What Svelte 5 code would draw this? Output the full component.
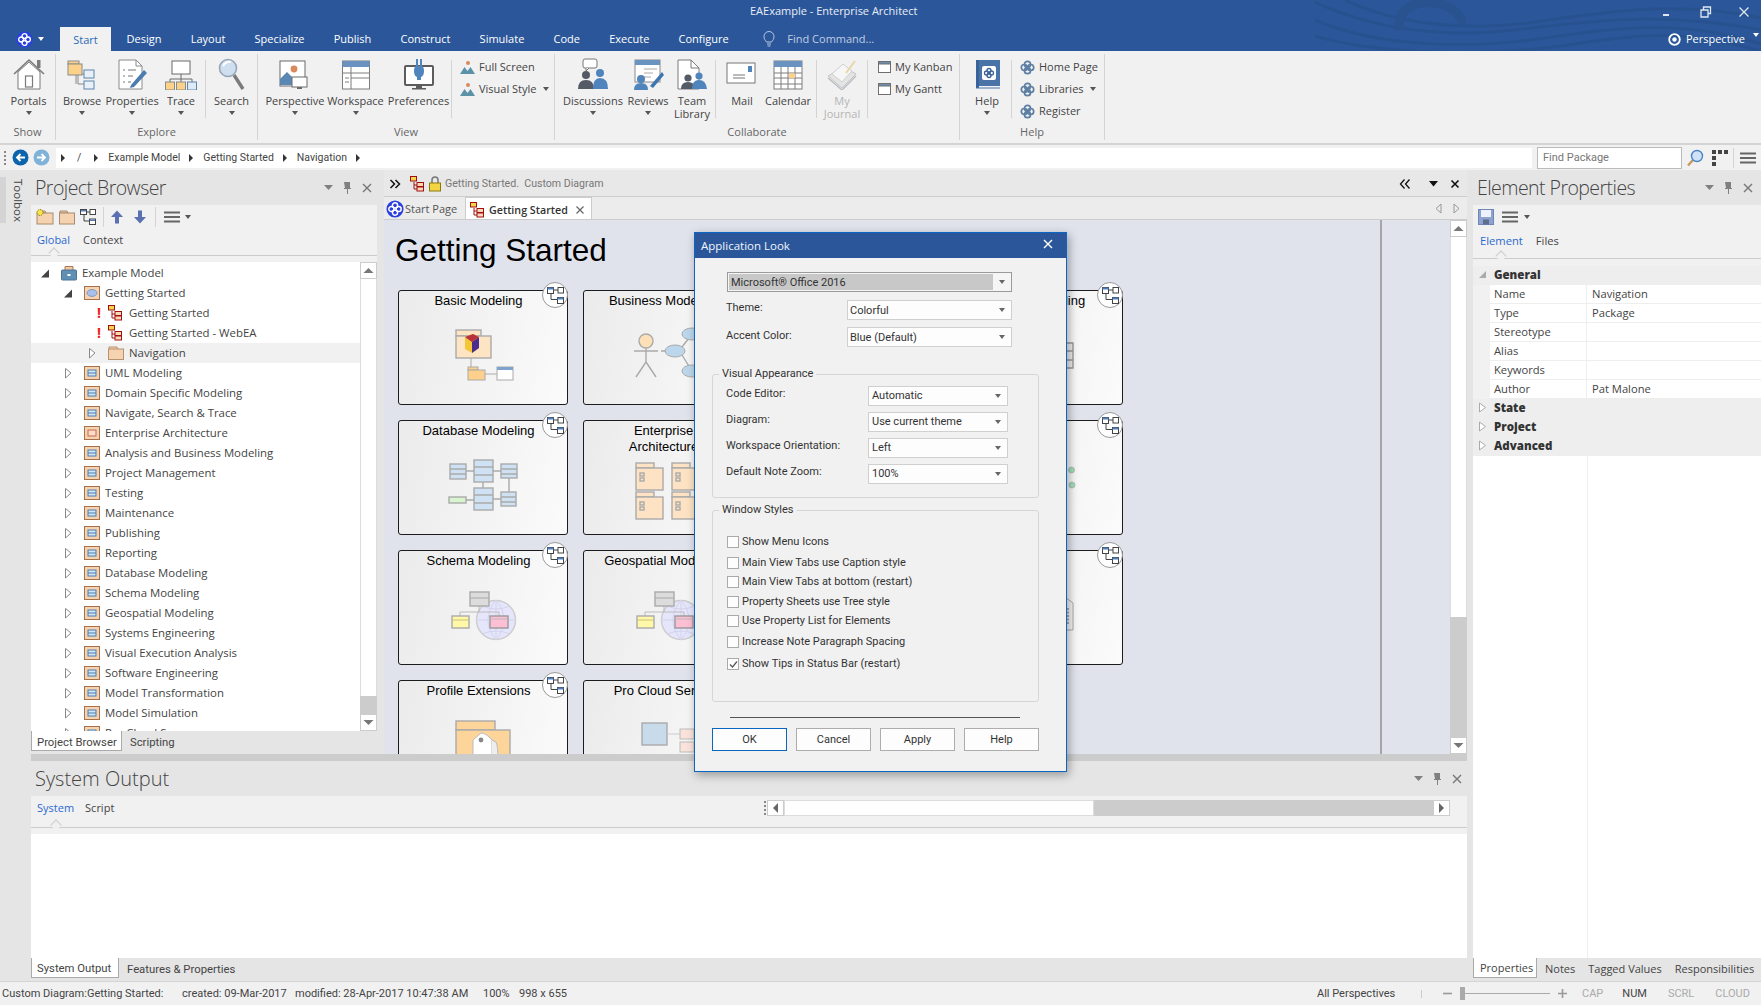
<script>
  const mainTabs = ['Design', 'Layout', 'Specialize', 'Publish', 'Construct', 'Simulate', 'Code', 'Execute', 'Configure'];

  const ribbon = [
    { name: 'Show', w: 56, pad: 0, items: [{ label: 'Portals', icon: 'portals', w: 57, caret: true }] },
    { name: 'Explore', w: 202, pad: 1, items: [
      { label: 'Browse', icon: 'browse', w: 50, caret: true },
      { label: 'Properties', icon: 'properties', w: 50, caret: true },
      { label: 'Trace', icon: 'trace', w: 48, caret: true },
      { sep: true },
      { label: 'Search', icon: 'search', w: 51, caret: true }
    ] },
    { name: 'View', w: 297, pad: 7, items: [
      { label: 'Perspective', icon: 'perspective', w: 60, caret: true },
      { label: 'Workspace', icon: 'workspace', w: 61, caret: true },
      { label: 'Preferences', icon: 'preferences', w: 65 },
      { sep: true },
      { ml: 8, small: [{ label: 'Full Screen', icon: 'mountain' }, { label: 'Visual Style', icon: 'mountain', caret: true }] }
    ] },
    { name: 'Collaborate', w: 405, pad: 8, items: [
      { label: 'Discussions', icon: 'discussions', w: 60, caret: true },
      { label: 'Reviews', icon: 'reviews', w: 50, caret: true },
      { label: 'Team\nLibrary', icon: 'team', w: 38 },
      { sep: true, ml: 4 },
      { label: 'Mail', icon: 'mail', w: 52 },
      { label: 'Calendar', icon: 'calendar', w: 40 },
      { sep: true, ml: 8 },
      { label: 'My\nJournal', icon: 'journal', w: 50, off: true },
      { sep: true },
      { ml: 10, small: [{ label: 'My Kanban', icon: 'win' }, { label: 'My Gantt', icon: 'win' }] }
    ] },
    { name: 'Help', w: 145, pad: 3, items: [
      { label: 'Help', icon: 'help', w: 48, caret: true },
      { sep: true },
      { ml: 8, small: [{ label: 'Home Page', icon: 'swirl' }, { label: 'Libraries', icon: 'swirl', caret: true }, { label: 'Register', icon: 'swirl' }] }
    ] }
  ];

  const tree = [
    { name: 'Example Model', lvl: 0, icon: 'model', open: true },
    { name: 'Getting Started', lvl: 1, icon: 'usecase', open: true },
    { name: 'Getting Started', lvl: 2, icon: 'diagram', warn: true },
    { name: 'Getting Started - WebEA', lvl: 2, icon: 'diagram', warn: true },
    { name: 'Navigation', lvl: 2, icon: 'folder', closed: true, hover: true },
    ...['UML Modeling', 'Domain Specific Modeling', 'Navigate, Search & Trace'].map((name) => ({ name, lvl: 1, icon: 'pkg', closed: true })),
    { name: 'Enterprise Architecture', lvl: 1, icon: 'pkgred', closed: true },
    ...[
      'Analysis and Business Modeling', 'Project Management', 'Testing', 'Maintenance', 'Publishing', 'Reporting',
      'Database Modeling', 'Schema Modeling', 'Geospatial Modeling', 'Systems Engineering', 'Visual Execution Analysis',
      'Software Engineering', 'Model Transformation', 'Model Simulation', 'Pro Cloud Server'
    ].map((name) => ({ name, lvl: 1, icon: 'pkg', closed: true }))
  ];

  const cards = [
    { title: 'Basic Modeling', art: 'basic', badge: true },
    { title: 'Business Modeling', art: 'business' },
    { title: 'Requirements', art: '' },
    { title: 'Process Modeling', art: 'box', badge: true },
    { title: 'Database Modeling', art: 'database', badge: true },
    { title: 'Enterprise\nArchitecture', art: 'enterprise' },
    { title: 'Testing', art: '' },
    { title: '', art: 'dots', badge: true },
    { title: 'Schema Modeling', art: 'schema', badge: true },
    { title: 'Geospatial Modeling', art: 'schema' },
    { title: 'Reporting', art: '' },
    { title: '', art: 'doc', badge: true },
    { title: 'Profile Extensions', art: 'profile', badge: true },
    { title: 'Pro Cloud Server', art: 'cloud' }
  ];

  const props = [['Name', 'Navigation'], ['Type', 'Package'], ['Stereotype', ''], ['Alias', ''], ['Keywords', ''], ['Author', 'Pat Malone']];

  const visual = [['Code Editor:', 'Automatic'], ['Diagram:', 'Use current theme'], ['Workspace Orientation:', 'Left'], ['Default Note Zoom:', '100%']];

  const checks = [
    { label: 'Show Menu Icons', h: 20 },
    { label: 'Main View Tabs use Caption style', h: 22 },
    { label: 'Main View Tabs at bottom (restart)', h: 16 },
    { label: 'Property Sheets use Tree style', h: 24 },
    { label: 'Use Property List for Elements', h: 14 },
    { label: 'Increase Note Paragraph Spacing', h: 28 },
    { label: 'Show Tips in Status Bar (restart)', h: 16, on: true }
  ];
</script>

{#snippet logo(size)}
  <svg width={size} height={size} viewBox="0 0 16 16" class="ico">
    <circle cx="8" cy="8" r="7.6" fill="#2a3fe0" />
    <g fill="none" stroke="#fff" stroke-width="1.3">
      <circle cx="8" cy="4.8" r="2.3" /><circle cx="8" cy="11.2" r="2.3" /><circle cx="4.8" cy="8" r="2.3" /><circle cx="11.2" cy="8" r="2.3" />
    </g>
  </svg>
{/snippet}

{#snippet swirl()}
  <svg width="15" height="15" viewBox="0 0 16 16" class="ico">
    <g fill="none" stroke="#5d7fa3" stroke-width="1.8">
      <circle cx="8" cy="4.6" r="3.2" /><circle cx="8" cy="11.4" r="3.2" /><circle cx="4.6" cy="8" r="3.2" /><circle cx="11.4" cy="8" r="3.2" />
    </g>
  </svg>
{/snippet}

{#snippet smallIcon(name)}
  {#if name === 'mountain'}
    <svg width="15" height="15" viewBox="0 0 15 15" class="ico">
      <circle cx="8" cy="3" r="2" fill="#d9895b" />
      <path d="M0 14 L4.5 7 L7.5 11 L10.5 7 L15 14 Z" fill="#5b92a8" />
    </svg>
  {:else if name === 'win'}
    <svg width="13" height="12" viewBox="0 0 13 12" class="ico">
      <rect x="0.5" y="0.5" width="12" height="11" fill="#fff" stroke="#6f6f6f" />
      <rect x="0.5" y="0.5" width="12" height="2.5" fill="#6f8fb0" stroke="#6f6f6f" />
    </svg>
  {:else}
    {@render swirl()}
  {/if}
{/snippet}

{#snippet bigIcon(name)}
  <svg width="32" height="32" viewBox="0 0 32 32" class="ico">
    {#if name === 'portals'}
      <path d="M1 16 L16 2 L31 16" fill="none" stroke="#7b7b7b" stroke-width="1.6" />
      <path d="M5 14 L16 4 L27 14 V31 H5 Z" fill="#fff" stroke="#7b7b7b" />
      <rect x="24" y="2" width="3.5" height="8" fill="#7b7b7b" />
      <rect x="12.5" y="18" width="7" height="11" fill="#fff" stroke="#7b7b7b" stroke-width="1.2" />
    {:else if name === 'browse'}
      <path d="M18 16 H12 V26 H18 M10 13 V26" fill="none" stroke="#888" />
      <rect x="2" y="3" width="11" height="3" fill="#fcd28b" stroke="#8b8b8b" />
      <rect x="2" y="6" width="14" height="11" fill="#fcd28b" stroke="#8b8b8b" />
      <rect x="18" y="12" width="10" height="8" fill="#e8f0f8" stroke="#5d86ad" />
      <rect x="18" y="23" width="10" height="8" fill="#e8f0f8" stroke="#5d86ad" />
    {:else if name === 'properties'}
      <path d="M3 2 H20 L26 8 V31 H3 Z" fill="#fff" stroke="#8a8a8a" />
      <path d="M20 2 V8 H26" fill="none" stroke="#8a8a8a" />
      <path d="M7 12 h2 M12 12 h8 M7 18 h2 M12 18 h5 M7 24 h2 M12 24 h3" stroke="#777" />
      <path d="M15 27 L28 12 L31 15 L18 29 L14 30 Z" fill="#4c7cae" />
    {:else if name === 'trace'}
      <rect x="7" y="3" width="18" height="13" fill="#fff" stroke="#6b6b6b" />
      <path d="M16 16 V21 M5 24 V21 H27 V24 M16 21 V24" fill="none" stroke="#6b6b6b" />
      <rect x="0.5" y="24" width="9" height="8" fill="#fcd28b" stroke="#8b8b8b" />
      <rect x="11.5" y="24" width="9" height="8" fill="#fcd28b" stroke="#8b8b8b" />
      <rect x="22.5" y="24" width="9" height="8" fill="#dcebf6" stroke="#5d86ad" />
    {:else if name === 'search'}
      <path d="M18 17 L27 31" stroke="#7b7b7b" stroke-width="3.4" />
      <circle cx="12" cy="10" r="8.5" fill="#cfdff0" stroke="#97a7b8" stroke-width="1.6" />
      <path d="M7 8 q3 -5 8 -4" fill="none" stroke="#fff" stroke-width="2" />
    {:else if name === 'perspective'}
      <rect x="1" y="3" width="25" height="25" fill="#fff" stroke="#6b6b6b" />
      <circle cx="15" cy="11" r="3.4" fill="#d9895b" />
      <path d="M1 27 V21 L8 14 L15 21 V27 Z" fill="#5a88b5" />
      <rect x="13" y="19" width="15" height="10" fill="#fff" stroke="#6b6b6b" />
      <path d="M18 29 h5 v2 h-5 z" fill="#6b6b6b" />
    {:else if name === 'workspace'}
      <rect x="2.5" y="3" width="27" height="28" fill="#fff" stroke="#7d7d7d" />
      <rect x="2.5" y="3" width="27" height="6" fill="#6a93bf" />
      <path d="M11 9 V31 M2.5 15 H29.5 M11 20 H29.5 M5 20 h4 M5 24 h4" fill="none" stroke="#7d7d7d" />
    {:else if name === 'preferences'}
      <rect x="2" y="8" width="28" height="19" rx="1" fill="#fff" stroke="#5d5d5d" stroke-width="2" />
      <path d="M13 27 h6 v3 h4 v1.5 h-14 v-1.5 h4 z" fill="#5d5d5d" />
      <path d="M13 1 h2 v7 h2 v-7 h2 v7 q2 1 2 5 q0 5 -3 6 v3 h-4 v-3 q-3 -1 -3 -6 q0 -4 2 -5 z" fill="#4f84bd" />
    {:else if name === 'discussions'}
      <rect x="6" y="1" width="14" height="9" rx="2" fill="#fff" stroke="#777" />
      <path d="M9 10 v3 l3 -3" fill="#fff" stroke="#777" />
      <circle cx="9" cy="17" r="4" fill="#555b66" />
      <path d="M1 31 q0 -9 8 -9 q8 0 8 9 z" fill="#555b66" />
      <circle cx="23" cy="15" r="4" fill="#4f84bd" />
      <path d="M16 31 q0 -11 7 -11 q8 0 8 11 z" fill="#4f84bd" />
    {:else if name === 'reviews'}
      <rect x="3" y="2" width="25" height="22" fill="#fff" stroke="#8a8a8a" />
      <rect x="3" y="2" width="25" height="5" fill="#6a93bf" />
      <path d="M12 11 h13 M12 15 h9 M12 19 h7" stroke="#aaa" />
      <circle cx="9" cy="21" r="4" fill="#4f84bd" />
      <path d="M2 32 q0 -7 7 -7 q7 0 7 7 z" fill="#4f84bd" />
      <path d="M18 28 L30 14 L32 17 L21 30 Z" fill="#3f76b0" />
    {:else if name === 'team'}
      <path d="M2 2 H15 L23 10 V31 H2 Z" fill="#fff" stroke="#7a7a7a" />
      <path d="M15 2 V10 H23" fill="none" stroke="#7a7a7a" />
      <circle cx="12" cy="20" r="3.6" fill="#555b66" />
      <path d="M5 31 q0 -7 7 -7 q7 0 7 7 z" fill="#555b66" />
      <circle cx="23" cy="18" r="3.6" fill="#4f84bd" />
      <path d="M16 31 q0 -9 7 -9 q7 0 8 9 z" fill="#4f84bd" />
    {:else if name === 'mail'}
      <rect x="1" y="5" width="28" height="20" fill="#fff" stroke="#777" />
      <rect x="22" y="8" width="4" height="6" fill="#4f84bd" />
      <path d="M7 17 h12 M7 20 h12" stroke="#777" />
    {:else if name === 'calendar'}
      <rect x="2" y="3" width="28" height="28" fill="#fff" stroke="#7d7d7d" />
      <rect x="2" y="3" width="28" height="6" fill="#6a93bf" />
      <path d="M9 9 V31 M16 9 V31 M23 9 V31 M2 15 H30 M2 20 H30 M2 26 H30" stroke="#7d7d7d" />
      <rect x="17" y="15.5" width="6" height="4.5" fill="#fcd28b" />
    {:else if name === 'journal'}
      <path d="M2 18 L17 9 L30 16 L16 30 Z" fill="#e4e4e4" stroke="#c4c4c4" />
      <path d="M6 16 L17 6 L26 13 L16 24 Z" fill="#f6f6f6" stroke="#cfcfcf" />
      <path d="M20 15 L29 3" stroke="#e8d6a5" stroke-width="2" />
      <path d="M2 20 L16 32 L30 18" fill="none" stroke="#b9bfc6" stroke-width="1.5" />
    {:else if name === 'help'}
      <rect x="5" y="2" width="24" height="26" fill="#4a74a8" />
      <rect x="5" y="2" width="3" height="28" fill="#3a629a" />
      <path d="M5 30 H29" stroke="#4a74a8" />
      <rect x="11" y="8" width="14" height="14" rx="2" fill="#fff" />
      <g fill="none" stroke="#3a629a" stroke-width="1.3">
        <circle cx="18" cy="12.5" r="2" /><circle cx="18" cy="17.5" r="2" /><circle cx="15.5" cy="15" r="2" /><circle cx="20.5" cy="15" r="2" />
      </g>
    {/if}
  </svg>
{/snippet}

{#snippet treeIcon(name)}
  <svg width="17" height="16" viewBox="0 0 17 16" class="ico">
    {#if name === 'model'}
      <path d="M4 5 V1.5 H12 V5" fill="#f3c9a0" stroke="#a77a53" />
      <rect x="0.5" y="5" width="15" height="10" rx="1" fill="#5f8fb5" stroke="#4b7396" />
      <rect x="6.5" y="9" width="3" height="2" fill="#fff" />
    {:else if name === 'folder'}
      <path d="M1 4 V2 H9 L10 4" fill="#f6d3b0" stroke="#b79272" />
      <rect x="0.5" y="4" width="15" height="10.5" fill="#f6d3b0" stroke="#b79272" />
    {:else if name === 'diagram'}
      <g stroke="#a01010" fill="#fff">
        <path d="M4 6 V13 H7 M4 9 H7" fill="none" />
        <rect x="0.5" y="0.5" width="6" height="4.5" fill="#f7d24b" />
        <rect x="7" y="6.5" width="6.5" height="4" fill="#f9d9b7" />
        <rect x="7" y="11" width="6.5" height="4" fill="#f9d9b7" />
      </g>
    {:else}
      <rect x="0.5" y="1.5" width="15" height="13" fill="#f6d3b0" stroke="#a4714a" />
      {#if name === 'usecase'}
        <ellipse cx="8" cy="8" rx="5" ry="3.4" fill="#a9c0ea" stroke="#7f97c4" />
      {:else if name === 'pkgred'}
        <rect x="4" y="5" width="8" height="6" fill="#fbdcc4" stroke="#c56a5a" />
      {:else}
        <rect x="4" y="5" width="8" height="6" fill="#d3e4f3" stroke="#4a7fb0" />
        <path d="M4 8 H12" stroke="#4a7fb0" />
      {/if}
    {/if}
  </svg>
{/snippet}

{#snippet expander(open)}
  <svg width="12" height="12" viewBox="0 0 12 12" class="ico">
    {#if open}
      <path d="M2 10.5 H10 V2.5 Z" fill="#444" />
    {:else}
      <path d="M3.5 1.5 L9 6 L3.5 11 Z" fill="#fff" stroke="#888" />
    {/if}
  </svg>
{/snippet}

{#snippet panelControls()}
  <svg width="48" height="14" viewBox="0 0 48 14" class="ico">
    <path d="M0 4 H9 L4.5 9 Z" fill="#808080" />
    <path d="M20 1 h6 v6 h1 v1 h-3 v5 h-1 v-5 h-3 v-1 h1 z" fill="#808080" />
    <path d="M39 3 L47 11 M47 3 L39 11" stroke="#777" stroke-width="1.4" />
  </svg>
{/snippet}

{#snippet menuIcon()}
  <svg width="16" height="12" viewBox="0 0 16 12" class="ico">
    <path d="M0 1.5 H16 M0 6 H16 M0 10.5 H16" stroke="#666" stroke-width="1.8" />
  </svg>
{/snippet}

{#snippet scrollArrow(up)}
  <svg width="17" height="17" viewBox="0 0 17 17" class="ico scroll-btn">
    <rect x="0.5" y="0.5" width="16" height="16" fill="#fff" stroke="#ccc" />
    <path d={up ? 'M3.5 11 L8.5 6 L13.5 11 Z' : 'M3.5 6 L8.5 11 L13.5 6 Z'} fill="#777" />
  </svg>
{/snippet}

{#snippet combo(value, cls)}
  <div class="combo {cls}">
    <span class="combo-value">{value}</span>
    <i class="caret"></i>
  </div>
{/snippet}

{#snippet cardArt(art)}
  <svg class="art" width="170" height="115" viewBox="0 0 170 115">
    {#if art === 'basic'}
      <path d="M73 68 V80 M87 84 H99" stroke="#aaa" />
      <rect x="58" y="40" width="25" height="6" fill="#fde5c4" stroke="#aaa" stroke-width="1.4" />
      <rect x="58" y="46" width="35" height="22" fill="#fde5c4" stroke="#aaa" stroke-width="1.4" />
      <path d="M67 47 L75 44 L81 47 V58 L74 63 L67 59 Z" fill="#f5c538" />
      <path d="M74 52 V63 L81 58 V47 Z" fill="#4a2d8c" />
      <path d="M67 47 L75 44 L81 47 L74 52 Z" fill="#b8323c" />
      <rect x="70" y="77" width="10" height="3" fill="#fdd08c" stroke="#aaa" />
      <rect x="70" y="80" width="17" height="10" fill="#fdd08c" stroke="#aaa" />
      <rect x="99" y="77" width="16" height="13" fill="#fff" stroke="#aaa" />
      <rect x="99" y="77" width="16" height="3" fill="#7fa3cc" />
    {:else if art === 'business'}
      <circle cx="63" cy="51" r="7" fill="#fde0b8" stroke="#aaa" stroke-width="1.4" />
      <path d="M63 58 V72 M51 61 H75 M63 72 L53 87 M63 72 L73 87 M78 61 H92 M99 57 L109 44 M99 65 L109 81" fill="none" stroke="#aaa" stroke-width="1.4" />
      <ellipse cx="92" cy="61" rx="10" ry="6" fill="#bcd7ec" stroke="#aaa" />
      <ellipse cx="109" cy="44" rx="10" ry="6" fill="#bcd7ec" stroke="#aaa" />
      <ellipse cx="109" cy="81" rx="10" ry="6" fill="#bcd7ec" stroke="#aaa" />
    {:else if art === 'box'}
      <path d="M100 53 H120 V78 H100 Z M100 61 H120 M100 70 H120" fill="#ececec" stroke="#999" stroke-width="1.4" />
    {:else if art === 'database'}
      <g fill="#cfe2f3" stroke="#aaa" stroke-width="1.4">
        <path d="M68 51 H76 M95 51 H103 M85 62 V68 M68 80 H76 M95 79 H103 M111 58 V72" fill="none" />
        <rect x="52" y="44" width="16" height="15" /><path d="M52 49 H68 M52 54 H68" />
        <rect x="76" y="40" width="19" height="22" /><path d="M76 47 H95 M76 55 H95" />
        <rect x="103" y="44" width="16" height="14" /><path d="M103 49 H119 M103 54 H119" />
        <rect x="51" y="77" width="17" height="6" fill="#d8f5cf" />
        <rect x="76" y="68" width="19" height="22" /><path d="M76 75 H95 M76 83 H95" />
        <rect x="103" y="72" width="15" height="14" /><path d="M103 77 H118 M103 82 H118" />
      </g>
    {:else if art === 'enterprise'}
      {#each [[53, 43], [89, 43], [53, 72], [89, 72]] as [x, y]}
        <g fill="#fde3c3" stroke="#aaa" stroke-width="1.4">
          <rect x={x} y={y} width="18" height="5" />
          <rect x={x} y={y + 5} width="27" height="22" />
          <rect x={x + 4} y={y + 10} width="4" height="3" />
          <rect x={x + 4} y={y + 15} width="4" height="3" />
        </g>
      {/each}
    {:else if art === 'dots'}
      <g fill="#9be0b5" stroke="#b9b9b9"><circle cx="118.5" cy="50" r="3" /><circle cx="119" cy="65" r="3" /></g>
    {:else if art === 'schema'}
      <circle cx="98" cy="70" r="19.5" fill="#e5e6fb" stroke="#ccc" stroke-width="1.4" />
      <path d="M78 70 H118 M98 50 V90 M84 56 Q98 62 112 56 M84 84 Q98 78 112 84 M98 50 Q82 70 98 90 M98 50 Q114 70 98 90" fill="none" stroke="#d3d4ec" />
      <path d="M81 56 V62 M62 66 V62 H101 V66" fill="none" stroke="#bbb" />
      <rect x="72" y="42" width="19" height="14" fill="#dcdcdc" stroke="#aaa" stroke-width="1.4" />
      <path d="M72 48 H91" stroke="#aaa" />
      <rect x="54" y="66" width="17" height="12" fill="#fff8a8" stroke="#aaa" stroke-width="1.4" />
      <path d="M54 70 H71" stroke="#c9c078" />
      <rect x="92" y="66" width="18" height="12" fill="#fdbfd4" stroke="#999" stroke-width="1.4" />
      <path d="M92 69 H110" stroke="#bbb" />
    {:else if art === 'doc'}
      <path d="M100 47 H112 L120 53 V80 H100 Z" fill="#f4f4f4" stroke="#aaa" />
      <path d="M115 58 V74" stroke="#aaa" stroke-width="2" stroke-dasharray="2 1.5" />
    {:else if art === 'profile'}
      <rect x="58" y="41" width="39" height="9" fill="#fdd49a" stroke="#aaa" stroke-width="1.4" />
      <rect x="58" y="50" width="54" height="40" fill="#fdd49a" stroke="#aaa" stroke-width="1.4" />
      <path d="M75 60 L83 53 Q88 53 94 60 V80 H75 Z" fill="#fff" stroke="#bbb" />
      <path d="M94 60 L98 62 Q100 66 100 80 H94" fill="#eee" stroke="#bbb" />
      <circle cx="83" cy="60" r="2.4" fill="#888" />
    {:else if art === 'cloud'}
      <rect x="59" y="43" width="25" height="22" fill="#c7dbea" stroke="#aaa" stroke-width="1.4" />
      <path d="M84 54 H97" stroke="#ccc" />
      <rect x="97" y="49" width="14" height="10" fill="#fbe3dc" stroke="#bbb" />
      <rect x="97" y="62" width="14" height="10" fill="#fbe3dc" stroke="#bbb" />
    {/if}
  </svg>
{/snippet}

<div class="app">
  <header class="topbar">
    <svg class="waves" width="446" height="51" viewBox="0 0 446 51">
      <g fill="none" stroke="#27528f" stroke-width="3">
        <path d="M0 2 C60 30 130 38 200 30 S340 10 446 30" />
        <path d="M30 0 C80 24 150 32 220 22 S360 0 446 18" />
        <path d="M0 20 C60 46 150 50 230 38 S370 20 446 44" />
        <path d="M0 36 C60 54 170 58 260 44 S380 34 446 51" />
      </g>
      <path d="M85 30 C80 6 105 0 125 4 C140 8 148 18 146 24" fill="none" stroke="#28538f" stroke-width="9" />
    </svg>
    <div class="titlerow">
      <span class="apptitle">EAExample - Enterprise Architect</span>
      <div class="winbtns">
        <svg width="12" height="12" viewBox="0 0 12 12"><path d="M1 9 H7" stroke="#dfe7f2" stroke-width="2" /></svg>
        <svg width="12" height="12" viewBox="0 0 12 12"><path d="M3.5 3.5 V1 H10.5 V7.5 H8 M1 4 H8 V11 H1 Z" fill="none" stroke="#dfe7f2" stroke-width="1.3" /></svg>
        <svg width="12" height="12" viewBox="0 0 12 12"><path d="M1.5 1.5 L10.5 10.5 M10.5 1.5 L1.5 10.5" stroke="#dfe7f2" stroke-width="1.3" /></svg>
      </div>
    </div>
    <nav class="menurow">
      <div class="applogo">{@render logo(17)}<i class="caret white"></i></div>
      <span class="mtab active">Start</span>
      {#each mainTabs as tab}
        <span class="mtab">{tab}</span>
      {/each}
      <svg class="bulb" width="12" height="16" viewBox="0 0 12 16"><path d="M3.5 11 C2 9 1 8 1 5.5 a5 5 0 0 1 10 0 C11 8 10 9 8.500 11 Z M4 13 H8 M4.500 15 H7.500" fill="none" stroke="#b9c9e0" /></svg>
      <span class="findcmd">Find Command...</span>
      <div class="persp">
        <svg width="13" height="13" viewBox="0 0 13 13"><circle cx="6.500" cy="6.500" r="5.300" fill="none" stroke="#fff" stroke-width="1.800" /><circle cx="6.500" cy="6.500" r="2.200" fill="#fff" /></svg>
        <span>Perspective</span>
        <i class="caret white up"></i>
      </div>
    </nav>
  </header>

  <section class="ribbon">
    {#each ribbon as group}
      <div class="rgroup" style={`width:${group.w}px`}>
        <div class="ritems" style={`padding-left:${group.pad}px`}>
          {#each group.items as item}
            {#if item.sep}
              <span class="rsep" style={`margin-left:${item.ml ?? 0}px`}></span>
            {:else if item.small}
              <div class="rsmall" style={`margin-left:${item.ml}px`}>
                {#each item.small as s}
                  <div class="srow">
                    <span class="sicon">{@render smallIcon(s.icon)}</span>
                    <span>{s.label}</span>
                    {#if s.caret}<i class="caret"></i>{/if}
                  </div>
                {/each}
              </div>
            {:else}
              <div class="rbtn" class:off={item.off} style={`width:${item.w}px`}>
                {@render bigIcon(item.icon)}
                <span class="rlabel">{item.label}</span>
                {#if item.caret}<i class="caret"></i>{/if}
              </div>
            {/if}
          {/each}
        </div>
        <div class="rname">{group.name}</div>
      </div>
    {/each}
  </section>

  <section class="crumbs">
    <span class="grip"></span>
    <svg class="navbtn" width="17" height="17" viewBox="0 0 17 17"><circle cx="8.500" cy="8.500" r="8" fill="#0c64ad" /><path d="M13 8.500 H5 M8.500 5 L5 8.500 L8.500 12" fill="none" stroke="#fff" stroke-width="1.800" /></svg>
    <svg class="navbtn second" width="17" height="17" viewBox="0 0 17 17"><circle cx="8.500" cy="8.500" r="8" fill="#7fb2d9" /><path d="M4 8.500 H12 M8.500 5 L12 8.500 L8.500 12" fill="none" stroke="#fff" stroke-width="1.800" /></svg>
    <div class="crumbpath">
      <i class="tri first"></i><span class="slash">/</span><i class="tri"></i>
      <span>Example Model</span><i class="tri"></i>
      <span>Getting Started</span><i class="tri"></i>
      <span>Navigation</span><i class="tri"></i>
    </div>
    <div class="findpkg">Find Package</div>
    <svg width="18" height="18" viewBox="0 0 18 18" class="crumb-search"><path d="M7 11 L2 16.500" stroke="#c7995a" stroke-width="2.400" /><circle cx="11" cy="7" r="5.500" fill="#cfe2f6" stroke="#4a83c2" stroke-width="1.400" /></svg>
    <svg width="16" height="18" viewBox="0 0 16 18" class="crumb-grid"><path d="M0 1 h4 v4 h-4 z M0 7 h4 v4 h-4 z M0 13 h4 v4 h-4 z M6 1 h4 v4 h-4 z M12 1 h4 v4 h-4 z" fill="#444" /></svg>
    <span class="crumb-sep"></span>
    <span class="crumb-menu">{@render menuIcon()}</span>
  </section>

  <main class="workspace">
    <aside class="gutter">
      <span class="toolbox-mark"></span>
      <span class="toolbox">Toolbox</span>
    </aside>

    <div class="middle">
      <div class="upper">
        <section class="browser">
          <div class="ptitle tight">
            <h2>Project Browser</h2>
            <span class="pctl">{@render panelControls()}</span>
          </div>
          <div class="ptoolbar">
            <svg width="18" height="16" viewBox="0 0 18 16" class="tb tb-first"><path d="M2 4 V2 H9 L10 4 Z" fill="#f6d3b0" stroke="#a98a6e" /><rect x="1" y="4" width="16" height="11" fill="#f6d3b0" stroke="#a98a6e" /><circle cx="4" cy="3.500" r="3" fill="#f6e64b" stroke="#8a7a10" stroke-dasharray="1.500 .8" /></svg>
            <svg width="16" height="16" viewBox="0 0 16 16" class="tb"><path d="M1 4 V2 H8 L9 4 Z" fill="#f6d3b0" stroke="#a98a6e" /><rect x="0.500" y="4" width="15" height="11" fill="#f6d3b0" stroke="#a98a6e" /></svg>
            <svg width="16" height="16" viewBox="0 0 16 16" class="tb"><g fill="#fff" stroke="#444"><path d="M4 6 V12 H9 M7 3 H10" fill="none" /><rect x="0.500" y="0.500" width="6" height="5" /><rect x="10" y="0.500" width="5.500" height="5" /><rect x="9.500" y="10" width="6" height="5.500" /></g><path d="M1 1 h5 v1.500 h-5 z M10 10.500 h5 v1.500 h-5 z" fill="#4f7fc0" /></svg>
            <span class="tsep"></span>
            <svg width="14" height="14" viewBox="0 0 14 14" class="tb tb-up"><path d="M7 0.500 L13 7 H9 V13.500 H5 V7 H1 Z" fill="#5a70b0" /></svg>
            <svg width="14" height="14" viewBox="0 0 14 14" class="tb tb-dn"><path d="M7 13.500 L13 7 H9 V0.500 H5 V7 H1 Z" fill="#5a70b0" /></svg>
            <span class="tsep"></span>
            <span class="tb-menu">{@render menuIcon()}</span>
            <i class="caret"></i>
          </div>
          <div class="subtabs">
            <span class="stab active">Global</span>
            <span class="stab">Context</span>
          </div>
          <div class="treewrap">
            <ul class="tree">
              {#each tree as row}
                <li class="row lvl{row.lvl}" class:hover={row.hover}>
                  <span class="slot">
                    {#if row.warn}<b class="warn">!</b>{:else if row.open || row.closed}{@render expander(row.open)}{/if}
                  </span>
                  {@render treeIcon(row.icon)}
                  <span class="rowname">{row.name}</span>
                </li>
              {/each}
            </ul>
            <div class="vscroll">
              {@render scrollArrow(true)}
              <div class="vtrack"></div>
              <div class="vrest"></div>
              {@render scrollArrow(false)}
            </div>
          </div>
          <div class="btabs">
            <span class="btab active">Project Browser</span>
            <span class="btab">Scripting</span>
          </div>
        </section>

        <section class="center">
          <div class="chead">
            <svg width="12" height="12" viewBox="0 0 12 12" class="dbl"><path d="M1.500 2 L5.500 6 L1.500 10 M6.500 2 L10.500 6 L6.500 10" fill="none" stroke="#111" stroke-width="1.500" /></svg>
            {@render treeIcon('diagram')}
            <svg width="12" height="16" viewBox="0 0 12 16" class="lock"><path d="M3 7 V4 a3 3 0 0 1 6 0 V7" fill="none" stroke="#777" stroke-width="1.500" /><rect x="0.500" y="7" width="11" height="8" fill="#f5d442" stroke="#8a7a10" /></svg>
            <span class="ctext">Getting Started.&nbsp; Custom Diagram</span>
            <svg width="12" height="12" viewBox="0 0 12 12" class="chev"><path d="M5.500 1.500 L1.500 6 L5.500 10.500 M10.500 1.500 L6.500 6 L10.500 10.500" fill="none" stroke="#111" stroke-width="1.300" /></svg>
            <svg width="9" height="6" viewBox="0 0 9 6" class="cdown"><path d="M0 0 H9 L4.500 5.500 Z" fill="#111" /></svg>
            <svg width="10" height="10" viewBox="0 0 10 10" class="cclose"><path d="M1.500 1.500 L8.500 8.500 M8.500 1.500 L1.500 8.500" stroke="#111" stroke-width="1.600" /></svg>
          </div>
          <div class="ctabs">
            <div class="ctab">{@render logo(18)}<span>Start Page</span></div>
            <div class="ctab active">
              {@render treeIcon('diagram')}<span>Getting Started</span>
              <svg width="10" height="10" viewBox="0 0 10 10"><path d="M1.500 1.500 L8.500 8.500 M8.500 1.500 L1.500 8.500" stroke="#666" stroke-width="1.200" /></svg>
            </div>
            <svg width="7" height="11" viewBox="0 0 7 11" class="tabnav"><path d="M6 1 L1 5.500 L6 10 Z" fill="none" stroke="#999" /></svg>
            <svg width="7" height="11" viewBox="0 0 7 11" class="tabnav next"><path d="M1 1 L6 5.500 L1 10 Z" fill="none" stroke="#999" /></svg>
          </div>
          <div class="canvaswrap">
            <div class="canvas">
              <span class="pageline"></span>
              <h1>Getting Started</h1>
              <div class="cards">
                {#each cards as card}
                  <article class="card">
                    <div class="card-title">{card.title}</div>
                    {@render cardArt(card.art)}
                    {#if card.badge}
                      <span class="badge">
                        <svg width="17" height="17" viewBox="0 0 17 17"><g fill="#fff" stroke="#444"><path d="M4 6 V12.500 H10 M7 3 H11" fill="none" /><rect x="0.500" y="0.500" width="6" height="6" /><rect x="11" y="0.500" width="5.500" height="5.500" /><rect x="10.500" y="10.500" width="6" height="6" /></g><path d="M0.500 0.500 h6 v2 h-6 z M10.500 10.500 h6 v2 h-6 z" fill="#4f7fc0" /></svg>
                      </span>
                    {/if}
                  </article>
                {/each}
              </div>
            </div>
            <div class="vscroll">
              {@render scrollArrow(true)}
              <div class="vtrack long"></div>
              <div class="vrest"></div>
              {@render scrollArrow(false)}
            </div>
          </div>
        </section>
      </div>

      <section class="output">
        <div class="ptitle">
          <h2>System Output</h2>
          <span class="pctl">{@render panelControls()}</span>
        </div>
        <div class="subtabs out">
          <span class="stab active">System</span>
          <span class="stab">Script</span>
          <div class="hscroll">
            <i class="hgrip"></i>
            <svg width="17" height="16" viewBox="0 0 17 16"><rect x="0.500" y="0.500" width="16" height="15" fill="#fff" stroke="#ccc" /><path d="M11 3 L6 8 L11 13 Z" fill="#666" /></svg>
            <div class="hthumb"></div>
            <div class="hrest"></div>
            <svg width="17" height="16" viewBox="0 0 17 16"><rect x="0.500" y="0.500" width="16" height="15" fill="#fff" stroke="#ccc" /><path d="M6 3 L11 8 L6 13 Z" fill="#666" /></svg>
          </div>
        </div>
        <div class="outbody"></div>
        <div class="btabs low">
          <span class="btab active">System Output</span>
          <span class="btab">Features &amp; Properties</span>
        </div>
      </section>
    </div>

    <section class="props">
      <div class="ptitle tight">
        <h2>Element Properties</h2>
        <span class="pctl">{@render panelControls()}</span>
      </div>
      <div class="ptoolbar">
        <svg width="16" height="16" viewBox="0 0 16 16" class="save"><rect x="0.500" y="0.500" width="15" height="15" fill="#8ea3cf" stroke="#6f86b8" /><rect x="3" y="1" width="10" height="7" fill="#eef2fa" /><rect x="5" y="10.500" width="6" height="5" fill="#5d6d8e" /></svg>
        <span class="tb-menu prop">{@render menuIcon()}</span>
        <i class="caret"></i>
      </div>
      <div class="subtabs prop">
        <span class="stab active">Element</span>
        <span class="stab">Files</span>
      </div>
      <div class="grid">
        <div class="pgroup"><svg width="9" height="9" viewBox="0 0 9 9"><path d="M1 8 H8 V1 Z" fill="#aaa" /></svg><b>General</b></div>
        {#each props as [k, v]}
          <div class="prow"><span class="pk">{k}</span><span class="pv">{v}</span></div>
        {/each}
        {#each ['State', 'Project', 'Advanced'] as g}
          <div class="pgroup"><svg width="9" height="11" viewBox="0 0 9 11"><path d="M1.500 1 L7.500 5.500 L1.500 10 Z" fill="#fff" stroke="#aaa" /></svg><b>{g}</b></div>
        {/each}
        <div class="pfill"><span></span></div>
      </div>
      <div class="btabs low right">
        <span class="btab active">Properties</span>
        <span class="btab">Notes</span>
        <span class="btab">Tagged Values</span>
        <span class="btab">Responsibilities</span>
      </div>
    </section>
  </main>

  <footer class="status">
    <span class="st-a">Custom Diagram:Getting Started:</span>
    <span class="st-b">created: 09-Mar-2017</span>
    <span class="st-c">modified: 28-Apr-2017 10:47:38 AM</span>
    <span class="st-d">100%</span>
    <span class="st-e">998 x 655</span>
    <span class="st-f">All Perspectives</span>
    <i class="st-sep"></i>
    <svg width="9" height="9" viewBox="0 0 9 9" class="st-minus"><path d="M0 4.500 H9" stroke="#999" stroke-width="1.600" /></svg>
    <div class="slider"><i></i></div>
    <svg width="9" height="9" viewBox="0 0 9 9" class="st-plus"><path d="M0 4.500 H9 M4.500 0 V9" stroke="#999" stroke-width="1.600" /></svg>
    <span class="st-k off k1">CAP</span>
    <span class="st-k k2">NUM</span>
    <span class="st-k off k3">SCRL</span>
    <span class="st-k off k4">CLOUD</span>
  </footer>

  <div class="dialog">
    <div class="dhead">
      <span>Application Look</span>
      <svg width="10" height="10" viewBox="0 0 10 10"><path d="M1 1 L9 9 M9 1 L1 9" stroke="#fff" stroke-width="1.400" /></svg>
    </div>
    <div class="dbody">
      <div class="dtop">
        {@render combo('Microsoft® Office 2016', 'main')}
        <div class="drow"><span>Theme:</span>{@render combo('Colorful', 'wide')}</div>
        <div class="drow"><span>Accent Color:</span>{@render combo('Blue (Default)', 'wide')}</div>
      </div>
      <div class="gbox visual">
        <span class="legend">Visual Appearance</span>
        {#each visual as [label, value]}
          <div class="vrow"><span>{label}</span>{@render combo(value, 'narrow')}</div>
        {/each}
      </div>
      <div class="gbox styles">
        <span class="legend">Window Styles</span>
        <div class="checks">
          {#each checks as c}
            <div class="check" style={`height:${c.h}px`}>
              <span class="box">
                {#if c.on}<svg width="9" height="9" viewBox="0 0 9 9"><path d="M1 4.500 L3.500 7 L8 1.500" fill="none" stroke="#555" stroke-width="1.200" /></svg>{/if}
              </span>
              <span>{c.label}</span>
            </div>
          {/each}
        </div>
      </div>
      <div class="dline"></div>
      <div class="dbtns">
        <button class="ok">OK</button>
        <button>Cancel</button>
        <button>Apply</button>
        <button>Help</button>
      </div>
    </div>
  </div>
</div>

<style>
  :global(body) {
    margin: 0;
    background: #e5e5e5;
  }

  .app {
    position: relative;
    width: 1761px;
    height: 1005px;
    overflow: hidden;
    display: flex;
    flex-direction: column;
    background: #e5e5e5;
    color: #444;
    font-family: "Open Sans", "Noto Sans", sans-serif;
    font-size: 11px;
    line-height: 14px;
  }

  .ico {
    display: block;
    flex: none;
  }

  .caret {
    display: inline-block;
    width: 0;
    height: 0;
    border-left: 3.5px solid transparent;
    border-right: 3.5px solid transparent;
    border-top: 4px solid #555;
  }

  .caret.white {
    border-top-color: #fff;
  }

  /* title bar + menu */
  .topbar {
    position: relative;
    height: 51px;
    flex: none;
    background: #2b579a;
    color: #fff;
  }

  .waves {
    position: absolute;
    right: 0;
    top: 0;
  }

  .titlerow {
    position: relative;
    height: 27px;
    display: flex;
    align-items: center;
    padding: 0 0 5px 750px;
    box-sizing: border-box;
  }

  .apptitle {
    color: #e8edf5;
  }

  .winbtns {
    position: absolute;
    right: 11px;
    top: 6px;
    display: flex;
    gap: 26px;
  }

  .menurow {
    position: relative;
    height: 24px;
    display: flex;
    align-items: center;
  }

  .applogo {
    width: 60px;
    display: flex;
    align-items: center;
    gap: 5px;
    padding-left: 16px;
    box-sizing: border-box;
  }

  .mtab {
    padding: 0 14.6px;
  }

  .mtab.active {
    background: #f1f1f1;
    color: #2b6ab8;
    height: 24px;
    line-height: 25px;
    width: 51px;
    padding: 0;
    margin-right: 1px;
    text-align: center;
  }

  .bulb {
    margin-left: 20px;
  }

  .findcmd {
    margin-left: 12px;
    color: #c0cde2;
  }

  .persp {
    position: absolute;
    right: 2px;
    top: 5px;
    display: flex;
    align-items: center;
    gap: 5px;
  }

  .caret.up {
    margin: -8px 0 0 3px;
  }

  /* ribbon */
  .ribbon {
    height: 92px;
    flex: none;
    display: flex;
    background: #f1f1f1;
    border-bottom: 2px solid #d4d4d4;
  }

  .rgroup {
    display: flex;
    flex-direction: column;
    box-sizing: border-box;
    border-right: 1px solid #d4d4d4;
    margin: 3px 0;
    flex: none;
  }

  .ritems {
    height: 68px;
    flex: none;
    display: flex;
  }

  .rbtn {
    display: flex;
    flex-direction: column;
    align-items: center;
    padding-top: 4px;
    flex: none;
  }

  .rbtn.off {
    color: #b5b5b5;
  }

  .rlabel {
    white-space: pre-line;
    text-align: center;
    margin-top: 4px;
    line-height: 13px;
  }

  .rbtn .caret {
    margin-top: 4px;
  }

  .rsep {
    width: 1px;
    flex: none;
    background: #d4d4d4;
    margin: 6px 0 4px;
  }

  .rsmall {
    padding-top: 2px;
    display: flex;
    flex-direction: column;
  }

  .srow {
    height: 22px;
    display: flex;
    align-items: center;
    white-space: nowrap;
    gap: 4px;
  }

  .srow .caret {
    margin-left: 2px;
  }

  .rname {
    height: 18px;
    line-height: 20px;
    text-align: center;
    color: #666;
  }

  /* breadcrumb */
  .crumbs {
    height: 25px;
    flex: none;
    display: flex;
    align-items: center;
    background: #f1f1f1;
    font-family: Roboto, sans-serif;
  }

  .grip {
    width: 2px;
    height: 14px;
    margin-left: 4px;
    background: repeating-linear-gradient(#888 0 2px, transparent 2px 4px);
  }

  .navbtn {
    margin-left: 6px;
  }

  .navbtn.second {
    margin-left: 4px;
  }

  .crumbpath {
    width: 1476px;
    height: 20px;
    margin-left: 6px;
    flex: none;
    background: #fff;
    display: flex;
    align-items: center;
    padding-left: 5px;
    box-sizing: border-box;
    font-size: 10.500px;
  }

  .tri {
    width: 0;
    height: 0;
    margin: 0 10px 0 9px;
    border-top: 4px solid transparent;
    border-bottom: 4px solid transparent;
    border-left: 4px solid #333;
  }

  .tri.first {
    margin: 0 12px 0 0;
  }

  .slash + .tri {
    margin-left: 13px;
  }

  .findpkg {
    width: 145px;
    height: 22px;
    box-sizing: border-box;
    margin-left: 5px;
    border: 1px solid #bbb;
    background: #fff;
    line-height: 20px;
    padding-left: 5px;
    color: #777;
    flex: none;
  }

  .crumb-search {
    margin-left: 4px;
  }

  .crumb-grid {
    margin-left: 8px;
  }

  .crumb-sep {
    width: 1px;
    height: 20px;
    background: #d4d4d4;
    margin-left: 5px;
  }

  .crumb-menu {
    margin-left: 6px;
  }

  /* main layout */
  .workspace {
    flex: 1;
    display: flex;
    min-height: 0;
  }

  .gutter {
    width: 31px;
    flex: none;
    display: flex;
    align-items: flex-start;
    padding-top: 7px;
    box-sizing: border-box;
  }

  .toolbox-mark {
    width: 6px;
    height: 46px;
    background: #d4d4d4;
    flex: none;
  }

  .toolbox {
    writing-mode: vertical-rl;
    margin: 2px 0 0 5px;
    font-size: 11.500px;
  }

  .middle {
    width: 1436px;
    flex: none;
    display: flex;
    flex-direction: column;
  }

  .upper {
    height: 584px;
    flex: none;
    display: flex;
    gap: 7px;
    border-bottom: 7px solid #ccc;
  }

  .browser {
    width: 346px;
    flex: none;
    display: flex;
    flex-direction: column;
  }

  .ptitle {
    height: 35px;
    flex: none;
    display: flex;
    align-items: center;
    justify-content: space-between;
    background: #e5e5e5;
  }

  .ptitle h2 {
    margin: 0 0 0 4px;
    font-size: 20px;
    font-weight: 300;
    line-height: 24px;
    color: #444;
  }

  .ptitle.tight h2 {
    font-size: 19.500px;
    letter-spacing: -0.550px;
  }

  .pctl {
    margin-right: 5px;
  }

  .props .pctl {
    margin-right: 8px;
  }

  .ptoolbar {
    height: 23px;
    flex: none;
    display: flex;
    align-items: center;
    background: #f1f1f1;
  }

  .tb-first {
    margin-left: 5px;
  }

  .tb {
    margin-right: 5px;
  }

  .tsep {
    width: 1px;
    height: 20px;
    background: #d4d4d4;
    margin: 0 4px 0 2px;
  }

  .tb-up {
    margin: 0 9px 0 2px;
  }

  .tb-dn {
    margin-right: 6px;
  }

  .tb-menu {
    margin: 0 5px 0 4px;
  }

  .subtabs {
    height: 28px;
    flex: none;
    display: flex;
    align-items: center;
    gap: 13px;
    padding: 0 0 3px 6px;
    box-sizing: border-box;
    background: #f1f1f1;
    border-bottom: 1px solid #ccc;
  }

  .stab.active {
    color: #2b6ad0;
    position: relative;
  }

  .stab.active::after {
    content: "";
    position: absolute;
    left: 50%;
    bottom: -9.500px;
    width: 7px;
    height: 7px;
    margin-left: -4px;
    transform: rotate(45deg);
    background: #f1f1f1;
    border-top: 1px solid #ccc;
    border-left: 1px solid #ccc;
  }

  .treewrap {
    flex: 1;
    min-height: 0;
    display: flex;
    background: #fff;
    border-top: 6px solid #f1f1f1;
    font-size: 11.400px;
  }

  .tree {
    flex: 1;
    list-style: none;
    margin: 0;
    padding: 1px 0 0;
    overflow: hidden;
  }

  .row {
    height: 20px;
    display: flex;
    align-items: center;
    white-space: nowrap;
  }

  .row.hover {
    background: #f1f1f1;
  }

  .lvl0 {
    padding-left: 8px;
  }

  .lvl1 {
    padding-left: 31px;
  }

  .lvl2 {
    padding-left: 55px;
  }

  .slot {
    width: 12px;
    margin-right: 10px;
    flex: none;
  }

  .warn {
    display: block;
    margin-left: 11px;
    color: #f02020;
    font-size: 14px;
    font-weight: 700;
    line-height: 16px;
  }

  .rowname {
    margin-left: 4px;
  }

  .vscroll {
    width: 17px;
    flex: none;
    display: flex;
    flex-direction: column;
    background: #fff;
  }

  .vtrack {
    flex: 1;
    background: #fff;
    border-left: 1px solid #ddd;
    border-right: 1px solid #ddd;
  }

  .vtrack.long {
    flex: 380;
  }

  .vrest {
    height: 18px;
    background: #ccc;
  }

  .canvaswrap .vrest {
    flex: 120;
    height: auto;
  }

  .btabs {
    height: 23px;
    flex: none;
    display: flex;
    background: #e5e5e5;
    font-family: Roboto, sans-serif;
    font-size: 11.300px;
  }

  .btab {
    padding: 5px 8px 0;
    white-space: nowrap;
  }

  .btab.active {
    height: 20px;
    background: #fff;
    border: 1px solid #aaa;
    border-top: 0;
    padding: 5px 5px 0;
    box-sizing: border-box;
    width: 91px;
  }

  .btabs.low .btab.active {
    width: 88px;
    padding-top: 4px;
  }

  .center {
    width: 1083px;
    flex: none;
    display: flex;
    flex-direction: column;
    min-height: 0;
  }

  .chead {
    height: 27px;
    flex: none;
    display: flex;
    align-items: center;
    padding-top: 2px;
    background: #e8e8e8;
    border-bottom: 1px solid #ccc;
    box-sizing: border-box;
    font-family: Roboto, sans-serif;
    font-size: 10.600px;
  }

  .dbl {
    margin: 0 9px 0 5px;
  }

  .lock {
    margin: 0 4px 0 2px;
  }

  .ctext {
    color: #777;
  }

  .chev {
    margin-left: auto;
  }

  .cdown {
    margin-left: 18px;
  }

  .cclose {
    margin: 0 7px 0 12px;
  }

  .ctabs {
    height: 23px;
    flex: none;
    display: flex;
    align-items: flex-end;
    background: #ececec;
    border-bottom: 1px solid #ccc;
    box-sizing: border-box;
  }

  .ctab {
    height: 22px;
    width: 81px;
    flex: none;
    display: flex;
    align-items: center;
    gap: 1px;
    padding: 2px 0 0 2px;
    box-sizing: border-box;
    color: #555;
    white-space: nowrap;
  }

  .ctab.active {
    background: #fff;
    color: #333;
    font-weight: 600;
    font-size: 10.700px;
    border: 1px solid #ccc;
    border-bottom: 0;
    width: 127px;
    gap: 2px;
    padding-left: 4px;
  }

  .ctab.active svg:last-child {
    margin-left: auto;
    margin-right: 6px;
  }

  .tabnav {
    margin-left: auto;
    align-self: center;
  }

  .tabnav.next {
    margin: 0 7px 0 11px;
  }

  .canvaswrap {
    flex: 1;
    min-height: 0;
    display: flex;
    background: #e0e3ec;
  }

  .canvas {
    position: relative;
    flex: 1;
    min-width: 0;
    padding: 12px 0 0 14px;
    box-sizing: border-box;
    overflow: hidden;
    font-family: "Liberation Sans", Arial, sans-serif;
    color: #000;
  }

  .pageline {
    position: absolute;
    left: 996px;
    top: 0;
    bottom: 0;
    width: 2px;
    background: #a5a5a5;
  }

  .canvas h1 {
    margin: 0 0 22px -3px;
    height: 36px;
    font-size: 31.500px;
    font-weight: 400;
    line-height: 36px;
    white-space: nowrap;
  }

  .cards {
    display: grid;
    grid-template-columns: repeat(4, 170px);
    grid-auto-rows: 115px;
    gap: 15px;
  }

  .card {
    position: relative;
    display: grid;
    box-sizing: border-box;
    border: 1px solid #1c1c1c;
    border-radius: 3px;
    background: linear-gradient(100deg, #ebebeb, #fbfbfb);
  }

  .card-title {
    grid-area: 1 / 1;
    padding: 2px 11px 0 2px;
    font-size: 13px;
    line-height: 16px;
    text-align: center;
    white-space: pre-line;
  }

  .art {
    grid-area: 1 / 1;
    margin: -1px;
  }

  .badge {
    position: absolute;
    top: -9px;
    right: -1px;
    width: 26px;
    height: 26px;
    box-sizing: border-box;
    display: flex;
    align-items: center;
    justify-content: center;
    border: 1px solid #999;
    border-radius: 50%;
    background: #fff;
  }

  /* system output */
  .output {
    flex: 1;
    min-height: 0;
    display: flex;
    flex-direction: column;
  }

  .subtabs.out {
    height: 32px;
    padding-bottom: 8px;
    gap: 11px;
  }

  .subtabs.out .stab.active::after {
    bottom: -14px;
  }

  .hscroll {
    margin-left: auto;
    margin-right: 17px;
    width: 686px;
    height: 16px;
    display: flex;
    flex: none;
    align-items: center;
  }

  .hgrip {
    width: 2px;
    height: 14px;
    margin-right: 1px;
    background: repeating-linear-gradient(#888 0 2px, transparent 2px 4px);
  }

  .hthumb {
    width: 310px;
    height: 16px;
    background: #fff;
    border: 1px solid #ddd;
    box-sizing: border-box;
  }

  .hrest {
    flex: 1;
    height: 16px;
    background: #ccc;
  }

  .outbody {
    flex: 1;
    background: #fff;
    border-top: 6px solid #f1f1f1;
  }

  /* properties */
  .props {
    width: 288px;
    margin-left: 6px;
    flex: none;
    display: flex;
    flex-direction: column;
    font-size: 11.200px;
  }

  .save {
    margin-left: 5px;
  }

  .tb-menu.prop {
    margin: 0 6px 0 8px;
  }

  .subtabs.prop {
    height: 31px;
    padding: 0 0 5px 7px;
  }

  .subtabs.prop .stab.active::after {
    bottom: -12px;
  }

  .grid {
    flex: 1;
    display: flex;
    flex-direction: column;
    background: #fff;
    padding-top: 7px;
    box-shadow: inset 0 7px 0 #f1f1f1;
  }

  .pgroup {
    height: 19px;
    flex: none;
    box-sizing: border-box;
    display: flex;
    align-items: center;
    background: #eee;
    padding: 0 0 2px 5px;
    color: #333;
    font-weight: 700;
    font-size: 11.500px;
  }

  .pgroup b {
    margin-left: 7px;
  }

  .prow {
    height: 19px;
    flex: none;
    box-sizing: border-box;
    display: grid;
    grid-template-columns: 97px 1fr;
    margin-left: 17px;
    background: #fff;
    border-bottom: 1px solid #eee;
    line-height: 18px;
    box-shadow: -17px 0 0 #f1f1f1;
  }

  .pk {
    padding-left: 4px;
    border-right: 1px solid #eee;
  }

  .pv {
    padding-left: 5px;
  }

  .pfill {
    flex: 1;
    padding-left: 114px;
  }

  .pfill span {
    display: block;
    height: 100%;
    border-left: 1px solid #eee;
  }

  .btabs.right {
    font-family: "Open Sans", sans-serif;
    font-size: 11px;
  }

  .btabs.right .btab {
    padding: 4px 6px 0 7px;
  }

  .btabs.right .btab.active {
    padding: 3px 4px 0 6px;
    width: 64px;
    margin-right: 1px;
  }

  /* status bar */
  .status {
    position: relative;
    height: 24px;
    flex: none;
    display: flex;
    align-items: center;
    background: #f1f1f1;
    border-top: 1px solid #d4d4d4;
    box-sizing: border-box;
    white-space: nowrap;
    font-family: Roboto, sans-serif;
  }

  .st-a {
    margin-left: 2px;
    width: 180px;
  }

  .st-b {
    width: 113px;
  }

  .st-c {
    width: 188px;
  }

  .st-d {
    width: 36px;
  }

  .st-e {
    width: 798px;
  }

  .st-f {
    width: 104px;
  }

  .st-sep {
    width: 1px;
    height: 8px;
    background: #ccc;
    margin-right: 21px;
  }

  .slider {
    width: 90px;
    height: 1px;
    margin-left: 8px;
    background: #aaa;
    position: relative;
  }

  .slider i {
    position: absolute;
    left: 0;
    top: -6px;
    width: 5px;
    height: 13px;
    background: #aaa;
  }

  .st-plus {
    margin-left: 8px;
  }

  .st-k.off {
    color: #aaa;
  }

  .k1 {
    margin-left: 15px;
  }

  .k2 {
    margin-left: 19px;
  }

  .k3 {
    margin-left: 21px;
  }

  .k4 {
    margin-left: 21px;
  }

  /* dialog */
  .dialog {
    position: absolute;
    left: 694px;
    top: 232px;
    width: 373px;
    height: 540px;
    box-sizing: border-box;
    background: #f1f1f1;
    border: 1px solid #0a66c2;
    box-shadow: 2px 3px 9px rgba(0, 0, 0, 0.35);
    display: flex;
    flex-direction: column;
    color: #333;
    font-family: Roboto, sans-serif;
  }

  .dhead {
    height: 25px;
    flex: none;
    background: #2b579a;
    color: #f2f5fa;
    display: flex;
    align-items: center;
    justify-content: space-between;
    padding: 0 13px 4px 6px;
    box-sizing: border-box;
    font-family: "Open Sans", sans-serif;
    font-size: 11.500px;
  }

  .dhead span {
    margin-top: 5px;
  }

  .dbody {
    padding: 14px 0 0 17px;
  }

  .dtop {
    margin-left: 15px;
    width: 285px;
  }

  .combo {
    height: 20px;
    box-sizing: border-box;
    display: flex;
    align-items: center;
    justify-content: space-between;
    padding: 0 6px 0 3px;
    background: #fdfdfd;
    border: 1px solid #d0d0d0;
    flex: none;
  }

  .combo .caret {
    border-top-color: #666;
  }

  .combo.main {
    border: 1px solid #9a9a9a;
    padding-left: 1px;
    background: #f5f5f5;
  }

  .combo.main .combo-value {
    width: 264px;
    height: 16px;
    line-height: 17px;
    padding-left: 2px;
    box-sizing: border-box;
    background: #c8c8c8;
  }

  .combo.wide {
    width: 165px;
  }

  .combo.narrow {
    width: 140px;
  }

  .drow {
    display: flex;
    justify-content: space-between;
    margin-top: 7px;
  }

  .dtop > .combo + .drow {
    margin-top: 8px;
  }

  .drow span:first-child {
    margin: 1px 0 0 -1px;
  }

  .drow + .drow span:first-child {
    margin-top: 2px;
  }

  .gbox {
    position: relative;
    width: 327px;
    box-sizing: border-box;
    border: 1px solid #d6d6d6;
    border-radius: 3px;
  }

  .legend {
    display: table;
    margin: -8px 0 0 6px;
    padding: 0 3px;
    background: #f1f1f1;
    line-height: 14px;
  }

  .visual {
    height: 124px;
    margin-top: 27px;
    padding-left: 13px;
  }

  .visual .legend {
    margin-left: -7px;
  }

  .vrow {
    display: flex;
    justify-content: space-between;
    width: 282px;
    height: 20px;
    margin-top: 6px;
    line-height: 14px;
  }

  .vrow > span:first-child {
    padding-top: 1px;
  }

  .legend + .vrow {
    margin-top: 5px;
  }

  .styles {
    height: 192px;
    margin-top: 12px;
  }

  .checks {
    margin: 15px 0 0 14px;
  }

  .check {
    display: flex;
    align-items: center;
    gap: 3px;
  }

  .box {
    width: 10px;
    height: 10px;
    border: 1px solid #aaa;
    background: #fdfdfd;
    display: block;
    box-sizing: content-box;
  }

  .box svg {
    display: block;
    margin: 0.500px;
  }

  .dline {
    width: 290px;
    height: 1px;
    margin: 15px 0 0 18px;
    background: #555;
  }

  .dbtns {
    display: flex;
    gap: 9px;
    margin-top: 10px;
  }

  .dbtns button {
    width: 75px;
    height: 23px;
    padding: 0;
    background: #fdfdfd;
    border: 1px solid #adadad;
    color: #333;
    font: inherit;
  }

  .dbtns .ok {
    border-color: #0a66c2;
  }
</style>
